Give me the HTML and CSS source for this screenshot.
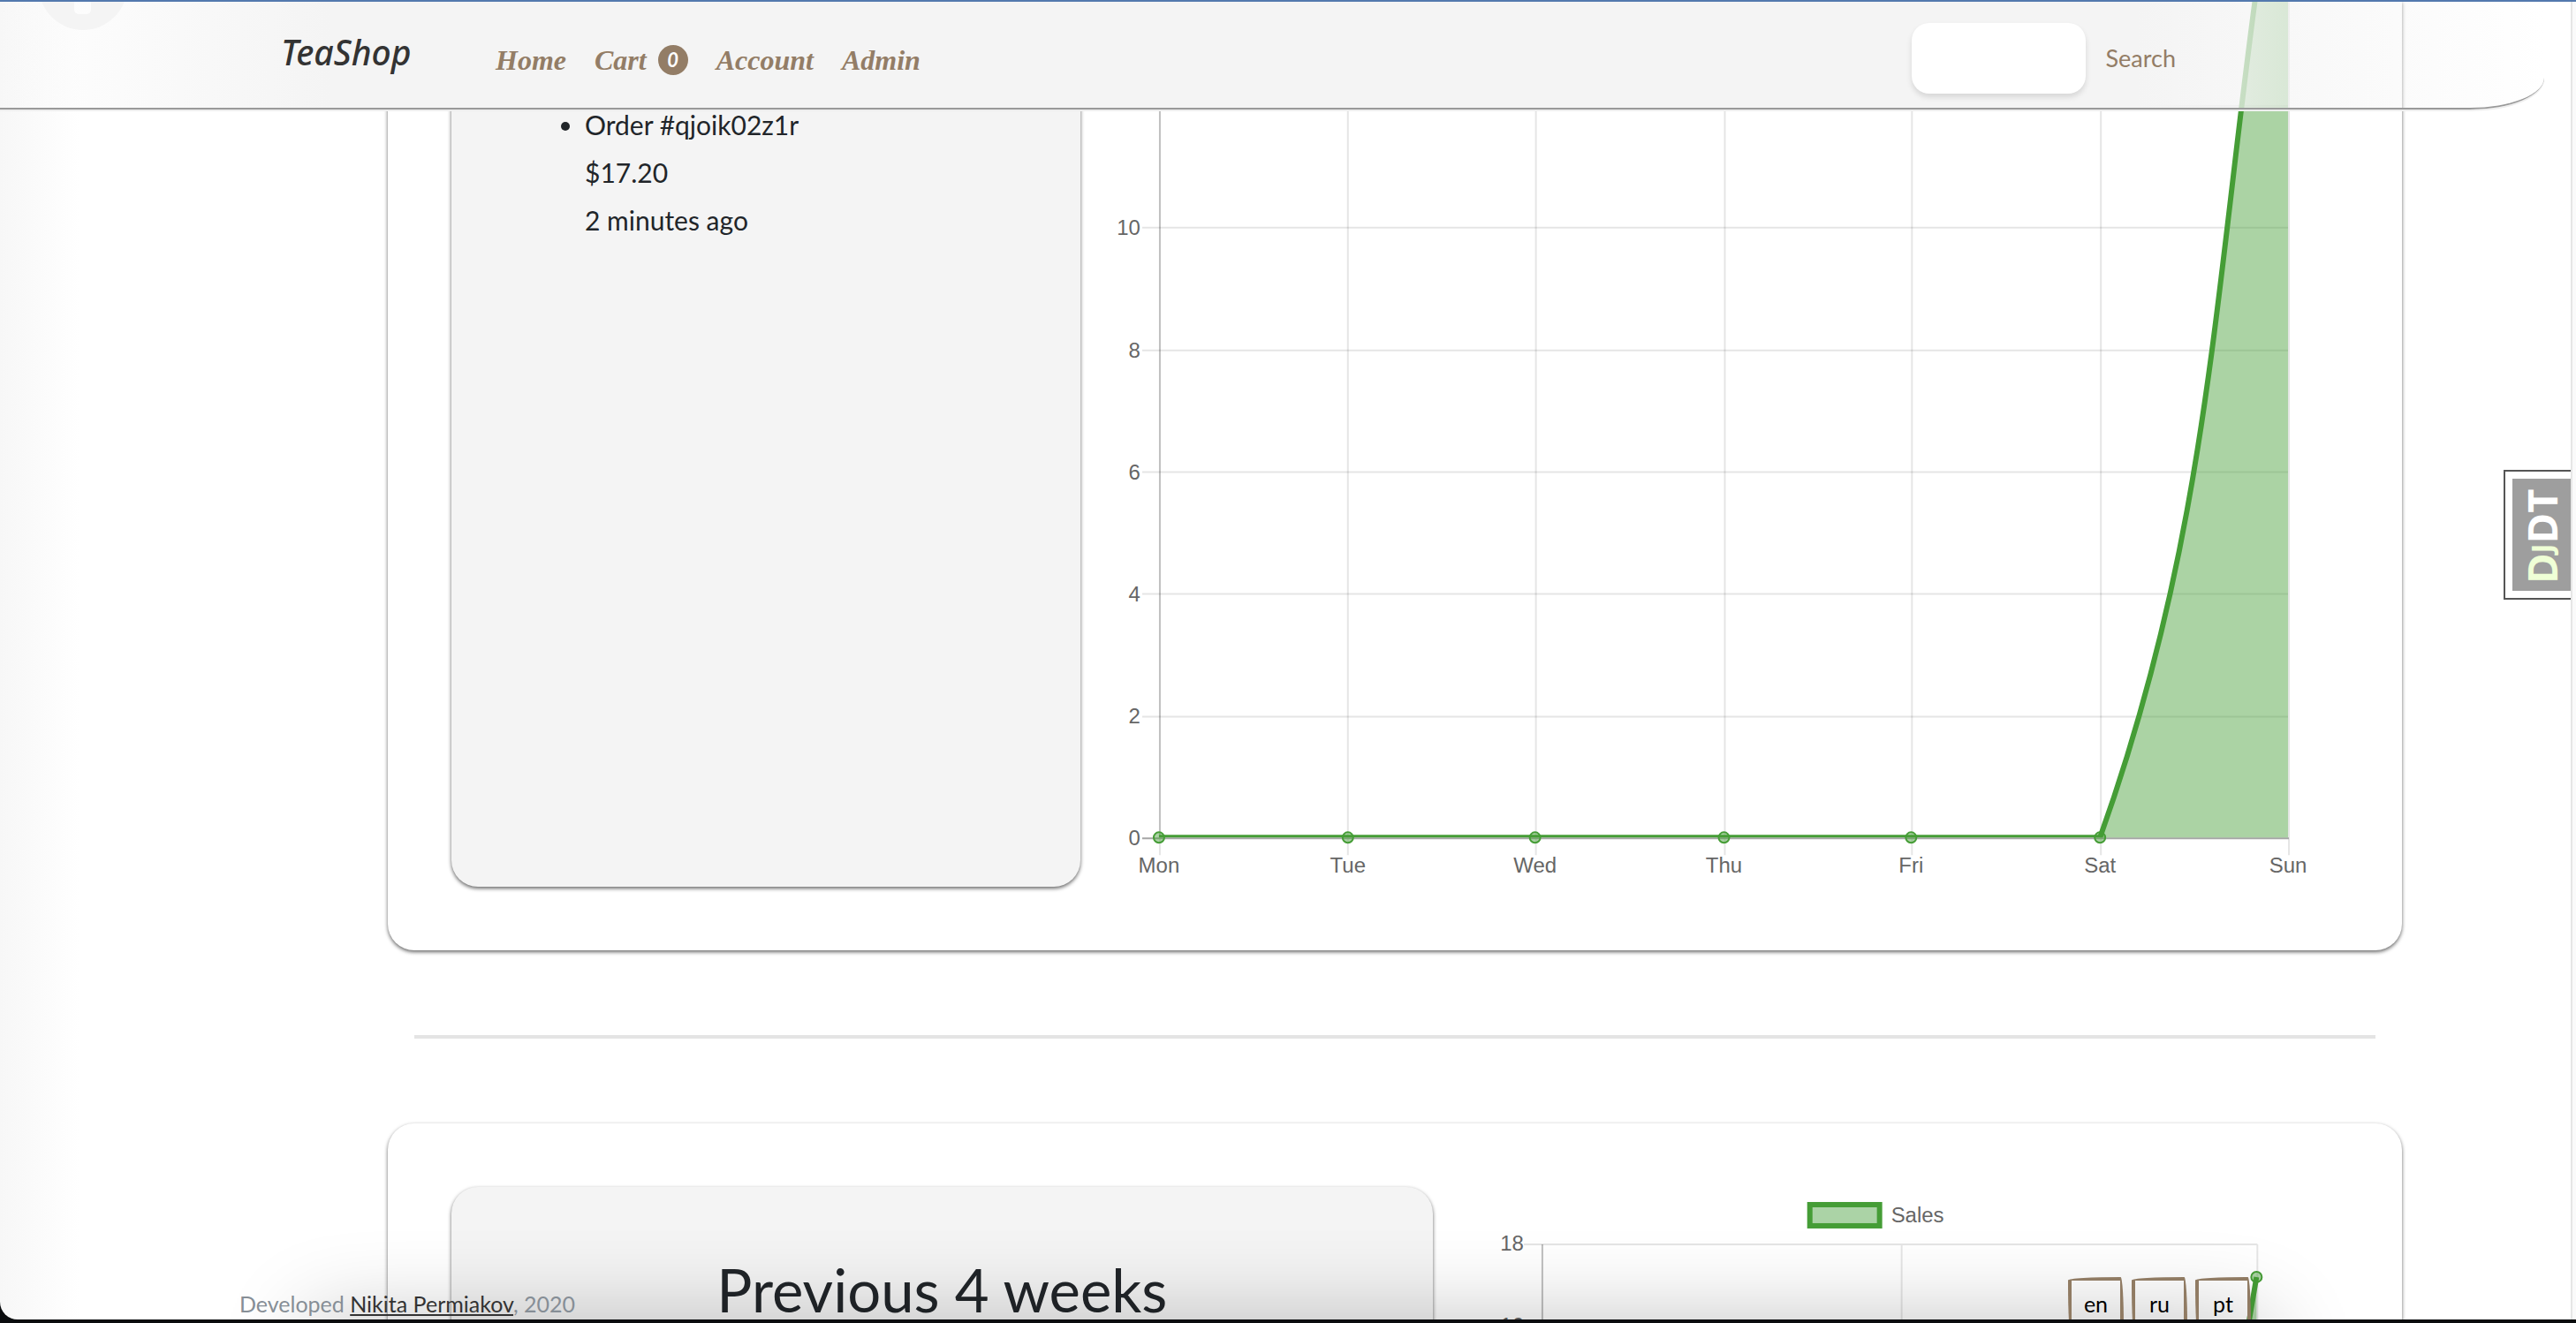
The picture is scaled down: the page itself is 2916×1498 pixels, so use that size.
FILE: index.html
```html
<!DOCTYPE html>
<html lang="en">
<head>
<meta charset="utf-8">
<title>TeaShop</title>
<link rel="stylesheet" href="styles.css">
</head>
<body>
<div class="page">
  <svg class="corner-icon" viewBox="0 0 100 100" aria-hidden="true">
    <circle cx="50" cy="50" r="50" fill="#f4f4f4"/>
    <rect x="40" y="40" width="19" height="42" rx="5" fill="#fff"/>
  </svg>

  <header class="navbar">
    <a class="brand" href="#">TeaShop</a>
    <nav class="links">
      <a href="#">Home</a>
      <a href="#">Cart <span class="badge">0</span></a>
      <a href="#">Account</a>
      <a href="#">Admin</a>
    </nav>
    <form class="search">
      <input type="search" aria-label="Search products">
      <button type="button">Search</button>
    </form>
  </header>

  <main class="content">
    <section class="card card-week">
      <div class="panel orders">
        <ul>
          <li>Order #qjoik02z1r<br>$17.20<br>2 minutes ago</li>
        </ul>
      </div>
      <svg class="chart" viewBox="0 0 1425 1004" role="img" aria-label="Sales this week">
        <clipPath id="plot"><path d="M86 0H1368V948H86Z"/></clipPath>
        <g class="grid">
          <path d="M70 119H1368M70 257H1368M70 396H1368M70 534H1368M70 672H1368M70 811H1368"/>
          <path d="M303 0V968M516 0V968M730 0V968M942 0V968M1156 0V968M1369 0V968M90 949V968"/>
        </g>
        <path class="axis-y" d="M90 0V948"/>
        <path class="axis-zero" d="M70 949H1369"/>
        <path class="area" d="M1155 948C1300 543 1283 234 1368 -242V948Z"/>
        <path class="line" clip-path="url(#plot)" d="M89 948H1155C1300 543 1283 234 1368 -242"/>
        <g class="points">
          <circle cx="89" cy="948" r="6"/><circle cx="303" cy="948" r="6"/><circle cx="515" cy="948" r="6"/>
          <circle cx="729" cy="948" r="6"/><circle cx="941" cy="948" r="6"/><circle cx="1155" cy="948" r="6"/>
        </g>
        <g class="labels end">
          <text x="68" y="265">10</text><text x="68" y="404">8</text><text x="68" y="542">6</text>
          <text x="68" y="680">4</text><text x="68" y="819">2</text><text x="68" y="957">0</text>
        </g>
        <g class="labels mid">
          <text x="89" y="988">Mon</text><text x="303" y="988">Tue</text><text x="515" y="988">Wed</text>
          <text x="729" y="988">Thu</text><text x="941" y="988">Fri</text><text x="1155" y="988">Sat</text>
          <text x="1368" y="988">Sun</text>
        </g>
      </svg>
    </section>

    <hr>

    <section class="card card-month">
      <div class="panel month">
        <h2>Previous 4 weeks</h2>
      </div>
      <svg class="chart" viewBox="0 0 1026 940" role="img" aria-label="Sales over the previous 4 weeks">
        <g class="grid">
          <path d="M103 65H934M103 157H934M531 65V900M934 65V900"/>
        </g>
        <path class="axis-y" d="M124 65V900"/>
        <path class="area" d="M799 893C850 650 879 418 933 102V893Z"/>
        <path class="line" d="M799 893C850 650 879 418 933 102"/>
        <g class="points"><circle cx="933" cy="102" r="6"/></g>
        <rect class="legend" x="427" y="20" width="79" height="24"/>
        <g class="labels">
          <text x="519" y="40">Sales</text>
        </g>
        <g class="labels end">
          <text x="103" y="72">18</text><text x="103" y="165">16</text>
        </g>
      </svg>
    </section>
  </main>

  <footer class="footer">
    <p>Developed <a href="#">Nikita Permiakov</a>, 2020</p>
    <div class="langs">
      <button type="button">en</button>
      <button type="button">ru</button>
      <button type="button">pt</button>
    </div>
  </footer>

  <div class="gutter"></div>
  <a class="debug" href="#"><span class="debug-text"><span class="dj">D<small>J</small></span>DT</span></a>
</div>
</body>
</html>
```
FILE: styles.css
```css
* { box-sizing: border-box; }

body {
  margin: 0;
  background: #0a0c0e;
  color: #212529;
  font-family: Lato, sans-serif;
}

.page {
  position: relative;
  height: calc(100vh - 4px);
  overflow: hidden;
  border-bottom-left-radius: 20px;
  border-top: 2px solid #5379ae;
  background: linear-gradient(90deg, #f7f7f7, #fff 90px);
}

.corner-icon {
  position: absolute;
  left: 44px;
  top: -68px;
  width: 100px;
}

/* Navigation bar */
.navbar {
  position: absolute;
  z-index: 3;
  top: 0;
  left: 0;
  width: calc(100% - 36px);
  display: flex;
  align-items: center;
  padding: 24px 417px 16px 318px;
  background: linear-gradient(90deg, rgba(244, 244, 244, 0), #f4f4f4 13%, #f4f4f4 84%, rgba(255, 255, 255, 0));
  border-bottom: 2px solid #999;
  border-bottom-right-radius: 84px 36px;
  box-shadow: 0 2px 0 #eee;
}

.brand {
  width: 243px;
  margin-bottom: 14px;
  font: italic 500 39px/44px "Noto Sans", sans-serif;
  color: #333;
  text-decoration: none;
}

.links {
  display: flex;
  gap: 32px;
  padding-top: 4px;
  font: italic bold 32px/40px "Liberation Serif", serif;
}

.links a {
  display: flex;
  align-items: center;
  gap: 13px;
  color: #937d66;
  text-decoration: none;
}

.badge {
  width: 34px;
  border-radius: 50%;
  background: #937d66;
  color: #fff;
  text-align: center;
  font: italic bold 22px/34px Lato, sans-serif;
}

.search {
  display: flex;
  align-items: center;
  gap: 23px;
  margin-left: auto;
}

.search input {
  width: 197px;
  height: 80px;
  padding: 0 20px;
  border: 0;
  border-radius: 20px;
  background: #fff;
  box-shadow: 0 4px 6px rgba(0, 0, 0, 0.12);
  font: inherit;
}

.search button {
  padding: 0;
  border: 0;
  background: none;
  color: #937d66;
  font: 27px/40px Lato, sans-serif;
}

/* Dashboard cards */
.content {
  padding: 0 197px 0 439px;
}

.card {
  display: grid;
  padding: 72px;
  border-radius: 30px;
  background: #fff;
  box-shadow: 0 2px 4px rgba(0, 0, 0, 0.6);
}

.card-week {
  grid-template-columns: 1fr 2fr;
  padding-top: 0;
  margin-top: -1px;
  border-radius: 0 0 30px 30px;
}

.card-month { grid-template-columns: 52fr 48fr; }

.panel {
  border-radius: 30px;
  background: #f4f4f4;
  box-shadow: 0 2px 4px rgba(0, 0, 0, 0.6);
}

.orders {
  padding: 113px 72px 0;
  border-radius: 0 0 30px 30px;
}

.orders ul {
  margin: 0;
  padding-left: 79px;
  font-size: 30px;
  line-height: 54px;
}

.month {
  padding: 72px;
  text-align: center;
}

.month h2 {
  margin: 0;
  font-size: 67px;
  font-weight: 400;
  line-height: 88px;
}

hr {
  height: 4px;
  margin: 96px 30px;
  border: 0;
  background: #e4e4e4;
}

/* Charts */
.chart {
  display: block;
  width: 100%;
}

.grid path {
  fill: none;
  stroke: rgba(0, 0, 0, 0.1);
  stroke-width: 2;
}

.axis-y { stroke: rgba(0, 0, 0, 0.25); stroke-width: 2; }
.axis-zero { stroke: #a6a6a6; stroke-width: 2; }
.area { fill: rgba(69, 157, 54, 0.45); }
.line { fill: none; stroke: #459d36; stroke-width: 6; }
.points { fill: rgba(69, 157, 54, 0.45); stroke: #459d36; stroke-width: 2; }
.legend { fill: #abd3a6; stroke: #459d36; stroke-width: 6; }
.labels { fill: #666; font: 24px "Liberation Sans", sans-serif; }
.end { text-anchor: end; }
.mid { text-anchor: middle; }

/* Footer */
.footer {
  position: absolute;
  z-index: 2;
  left: 0;
  right: 0;
  bottom: -20px;
  display: flex;
  justify-content: space-between;
  padding: 0 368px 0 271px;
}

.footer::before {
  content: "";
  position: absolute;
  z-index: -1;
  top: 48px;
  left: 350px;
  right: 350px;
  height: 300px;
  box-shadow: 0 0 100px rgba(0, 0, 0, 0.24);
}

.footer p {
  margin: 10px 0 0;
  color: #868e96;
  font-size: 25px;
  line-height: 40px;
}

.footer a { color: #333; }

.langs {
  display: flex;
  gap: 9px;
}

.langs button {
  width: 63px;
  height: 68px;
  padding: 0 0 8px;
  border: 4px solid #907b63;
  border-radius: 255px 15px 225px 15px / 15px 225px 15px 255px;
  background: none;
  color: #000;
  font: 25px/32px Lato, sans-serif;
}

/* Scroll gutter and debug toolbar handle */
.gutter {
  position: absolute;
  z-index: 1;
  top: 0;
  right: 0;
  bottom: 0;
  width: 6px;
  border-left: 2px solid #e6e6e6;
  background: #fafafa;
}

.debug {
  position: absolute;
  z-index: 1;
  top: 530px;
  right: 6px;
  width: 76px;
  height: 147px;
  padding: 8px 0 8px 8px;
  border: 2px solid #555;
  border-right: 0;
  background: #fff;
  text-decoration: none;
}

.debug-text {
  display: block;
  width: 100%;
  height: 100%;
  padding-top: 8px;
  background: #9e9e9e;
  color: #fff;
  font: bold 47px/66px "Open Sans", sans-serif;
  writing-mode: vertical-rl;
  transform: rotate(180deg);
}

.dj { color: #efffd6; }
.dj small { font-size: 32px; }
```
